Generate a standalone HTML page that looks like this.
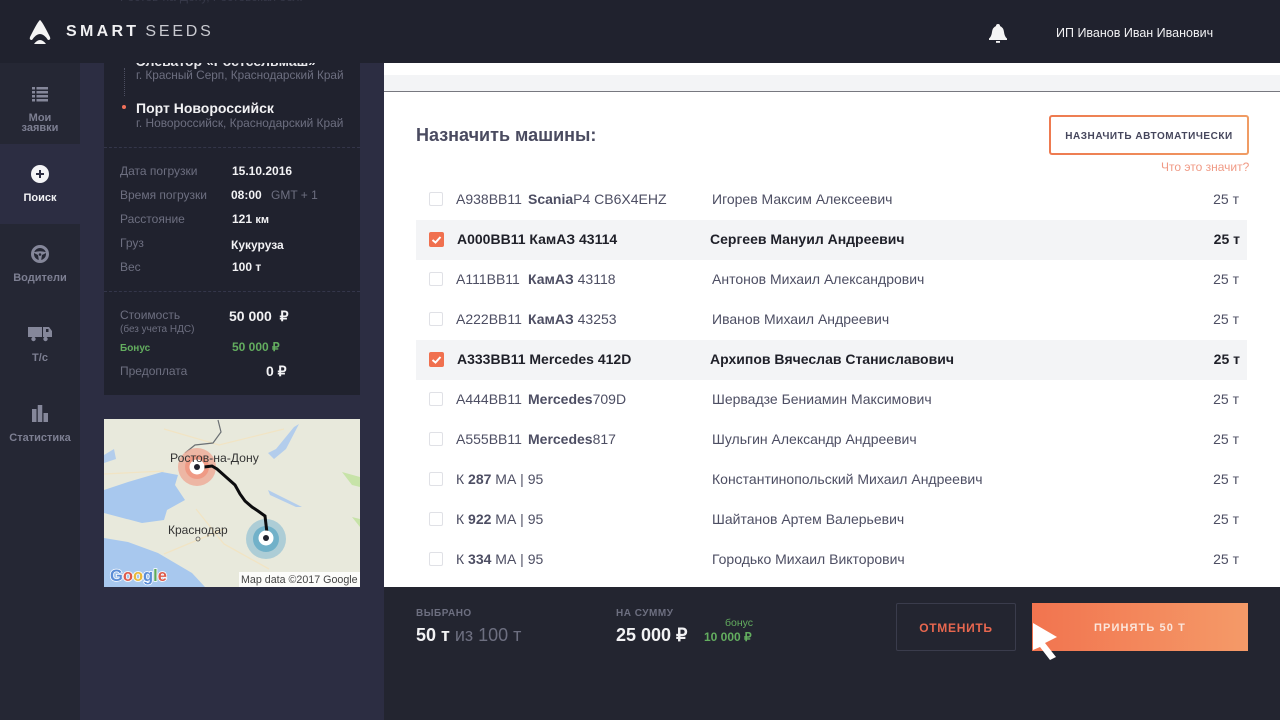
<!DOCTYPE html>
<html lang="ru"><head><meta charset="utf-8"><title>SmartSeeds</title>
<style>
*{margin:0;padding:0;box-sizing:border-box}
html,body{width:1280px;height:720px;overflow:hidden;background:#232530}
body{position:relative;font-family:"Liberation Sans",sans-serif}
.a{position:absolute}
.t{position:absolute;white-space:nowrap;line-height:16px;height:16px}
.nav{position:absolute;left:0;width:80px;text-align:center;font-size:11px;font-weight:700;color:#7d7f92;line-height:10px}
.g{color:#6d6f80;font-size:12px}
.w{color:#f2f2f4;font-size:12px;font-weight:700}
.row{position:absolute;left:416px;width:831px;height:40px;font-size:14px;color:#4d4e63}
.row.on{background:#f3f4f6;color:#1f2029;font-weight:700}
.row span{position:absolute;top:11px;line-height:16px;white-space:nowrap}
.row b{font-weight:700}
.row em{font-style:normal;display:inline-block;width:72px}
.cb{position:absolute;left:13px;top:12px;width:14px;height:14px;border:1px solid #e0e1e6;border-radius:2px;background:#fff}
.on .cb{background:#f0704f;border:0;width:15px;height:15px}
</style></head><body>
<div class="a" style="left:0;top:0;width:80px;height:720px;background:#252734"></div>
<div class="a" style="left:0;top:144px;width:80px;height:80px;background:#2c2d42"></div>
<div class="a" style="left:80px;top:0;width:304px;height:720px;background:#2c2d42"></div>
<div class="a" style="left:104px;top:0;width:256px;height:395px;background:#20222e"></div>
<div class="a" style="left:124px;top:68px;width:0;height:28px;border-left:1px dotted #4c4e60"></div>
<div class="a" style="left:122px;top:105px;width:4px;height:4px;border-radius:50%;background:#f0705a"></div>
<div class="t" style="left:136px;top:53px;font-size:14px;font-weight:700;color:#e8e8ec">Элеватор «Ростсельмаш»</div>
<div class="t" style="left:136px;top:67px;font-size:11.800px;color:#6d6f80">г. Красный Серп, Краснодарский Край</div>
<div class="t" style="left:136px;top:100px;font-size:14px;font-weight:700;color:#f2f2f4">Порт Новороссийск</div>
<div class="t" style="left:136px;top:115px;font-size:11.900px;color:#6d6f80">г. Новороссийск, Краснодарский Край</div>
<div class="a" style="left:104px;top:147px;width:256px;border-top:1px dashed #34364a"></div>
<div class="t g" style="left:120px;top:163px">Дата погрузки</div><div class="t w" style="left:232px;top:163px">15.10.2016</div>
<div class="t g" style="left:120px;top:187px">Время погрузки</div><div class="t w" style="left:231px;top:187px">08:00</div><div class="t g" style="left:271px;top:187px">GMT + 1</div>
<div class="t g" style="left:120px;top:211px">Расстояние</div><div class="t w" style="left:232px;top:211px">121 <span style="font-size:11px">км</span></div>
<div class="t g" style="left:120px;top:235px">Груз</div><div class="t w" style="left:231px;top:237px">Кукуруза</div>
<div class="t g" style="left:120px;top:259px">Вес</div><div class="t w" style="left:232px;top:259px">100 т</div>
<div class="a" style="left:104px;top:291px;width:256px;border-top:1px dashed #34364a"></div>
<div class="t g" style="left:120px;top:307px">Стоимость</div><div class="t" style="left:120px;top:324px;font-size:10px;color:#6d6f80;line-height:12px">(без учета НДС)</div>
<div class="t w" style="left:229px;top:308px;font-size:14px">50 000 &nbsp;₽</div>
<div class="t" style="left:120px;top:343px;font-size:10px;font-weight:700;color:#63ad5f;line-height:12px">Бонус</div>
<div class="t" style="left:232px;top:339px;font-size:12px;font-weight:700;color:#63ad5f">50 000 ₽</div>
<div class="t g" style="left:120px;top:363px">Предоплата</div><div class="t w" style="left:266px;top:363px;font-size:14px">0 ₽</div>

<svg class="a" style="left:104px;top:419px" width="256" height="168" viewBox="0 0 256 168">
<rect width="256" height="168" fill="#e8e9dc"/>
<path d="M0 71L24 63 58 53 74 56 71 66 81 81 63 91 60 101 38 104 0 94Z" fill="#a8c8ee"/>
<path d="M0 119L24 123 54 134 88 154 101 168H0Z" fill="#a8c8ee"/>
<path d="M0 36L10 30 12 40 0 44ZM164 34L172 30 190 8 195 5 182 30 170 40ZM164 71L198 88 192 88 166 76Z" fill="#b3cdec"/>
<path d="M238 53L256 58V68L248 66ZM248 98L256 100V108Z" fill="#c7e3a8"/>
<path d="M60 10L115 26 180 10M0 55L60 52M92 90L120 125 165 150M60 135L120 110" stroke="#f1e4c4" stroke-width="1.300" fill="none"/>
<path d="M114 1L117 13 109 24 91 26 81 34" stroke="#6b7074" stroke-width="1.200" fill="none"/>
<circle cx="93" cy="48" r="19" fill="#eea996" opacity=".8"/><circle cx="93" cy="48" r="12" fill="#ef8f78" opacity=".7"/>
<circle cx="162" cy="120" r="20" fill="#8dbfd3" opacity=".65"/><circle cx="162" cy="120" r="13" fill="#62aac6" opacity=".8"/>
<path d="M100 48L108 47 113 50 122 58 131 66 136 75 141 82 148 88 154 92 161 97 163 114" stroke="#0c0c0e" stroke-width="3" fill="none"/>
<circle cx="93" cy="48" r="7.500" fill="#fff"/><circle cx="93" cy="48" r="3" fill="#20222e"/>
<circle cx="162" cy="119" r="7.500" fill="#fff"/><circle cx="162" cy="119" r="3" fill="#20222e"/>
<circle cx="94" cy="120" r="2" fill="none" stroke="#555" stroke-width=".8"/>
<text x="66" y="43" font-family="Liberation Sans" font-size="12.200" fill="#333">Ростов-на-Дону</text>
<text x="64" y="115" font-family="Liberation Sans" font-size="12" fill="#333">Краснодар</text>
<text x="6" y="162" font-family="Liberation Sans" font-size="16.500" font-weight="700" fill="#5b8dd6" stroke="#fff" stroke-width="1.500" paint-order="stroke">G<tspan fill="#dd5b4c">o</tspan><tspan fill="#e8b93c">o</tspan><tspan fill="#5b8dd6">g</tspan><tspan fill="#5ea95c">l</tspan><tspan fill="#dd5b4c">e</tspan></text>
<rect x="135" y="153" width="121" height="15" fill="#fff" opacity=".85"/>
<text x="137" y="164" font-family="Liberation Sans" font-size="10.700" fill="#444">Map data ©2017 Google</text>
</svg>

<svg class="a" style="left:31px;top:85px" width="18" height="18" viewBox="0 0 18 18" fill="#85879a"><path d="M1 2h3v2.500H1zM5.500 2H17v2.500H5.500zM1 6h3v2.500H1zM5.500 6H17v2.500H5.500zM1 10h3v2.500H1zM5.500 10H17v2.500H5.500zM1 14h3v2.500H1zM5.500 14H17v2.500H5.500z"/></svg>
<div class="nav" style="top:113px">Мои<br>заявки</div>
<svg class="a" style="left:31px;top:165px" width="18" height="18" viewBox="0 0 18 18"><circle cx="9" cy="9" r="9" fill="#f4f4f6"/><path d="M5 9h8M9 5v8" stroke="#2c2d42" stroke-width="2"/></svg>
<div class="nav" style="top:193px;color:#f0f0f3">Поиск</div>
<svg class="a" style="left:31px;top:245px" width="18" height="18" viewBox="0 0 18 18"><circle cx="9" cy="9" r="7.500" fill="none" stroke="#85879a" stroke-width="3"/><path d="M2 7.500Q9 5 16 7.500L11 10 10 16H8L7 10Z" fill="#85879a"/><circle cx="9" cy="9.500" r="1.300" fill="#252734"/></svg>
<div class="nav" style="top:273px">Водители</div>
<svg class="a" style="left:28px;top:326px" width="24" height="16" viewBox="0 0 24 16" fill="#85879a"><path d="M0 1h14v10H0zM15 1h6l3 4v6h-9z"/><circle cx="5.500" cy="13" r="2.200"/><circle cx="17.500" cy="13" r="2.200"/><rect x="18" y="3" width="2.500" height="3" fill="#252734"/></svg>
<div class="nav" style="top:353px">Т/с</div>
<svg class="a" style="left:32px;top:405px" width="16" height="17" viewBox="0 0 16 17" fill="#85879a"><path d="M0 4h4.500v13H0zM5.750 0h4.500v17h-4.500zM11.500 8H16v9h-4.500z"/></svg>
<div class="nav" style="top:433px">Статистика</div>

<div class="a" style="left:384px;top:63px;width:896px;height:525px;background:#fff"></div>
<div class="a" style="left:384px;top:75px;width:896px;height:17px;background:#f3f4f6;border-bottom:1px solid #77787f"></div>
<div class="t" style="left:416px;top:125px;height:20px;line-height:20px;font-size:18px;font-weight:700;color:#4a4b60">Назначить машины:</div>
<div class="a" style="left:1049px;top:115px;width:200px;height:40px;border:2px solid transparent;border-radius:3px;background:linear-gradient(#fff,#fff) padding-box,linear-gradient(90deg,#ee7a50,#f09c64) border-box;text-align:center;line-height:39px;font-size:10px;font-weight:700;letter-spacing:.55px;color:#45465c">НАЗНАЧИТЬ АВТОМАТИЧЕСКИ</div>
<div class="t" style="left:1161px;top:159px;font-size:12px;color:#f09a85">Что это значит?</div>

<div class="row" style="top:180px"><i class="cb"></i><span style="left:40px"><em>А938ВВ11</em><b>Scania</b>Р4 СВ6Х4ЕНZ</span><span style="left:296px">Игорев Максим Алексеевич</span><span style="right:8px">25 т</span></div>
<div class="row on" style="top:220px"><i class="cb"></i><svg class="a" style="left:13px;top:12px" width="15" height="15"><path d="M3.500 8L6.500 10.500 11.500 5" stroke="#fff" stroke-width="2" fill="none"/></svg><span style="left:41px">А000ВВ11 КамАЗ 43114</span><span style="left:294px">Сергеев Мануил Андреевич</span><span style="right:7px">25 т</span></div>
<div class="row" style="top:260px"><i class="cb"></i><span style="left:40px"><em>А111ВВ11</em><b>КамАЗ</b> 43118</span><span style="left:296px">Антонов Михаил Александрович</span><span style="right:8px">25 т</span></div>
<div class="row" style="top:300px"><i class="cb"></i><span style="left:40px"><em>А222ВВ11</em><b>КамАЗ</b> 43253</span><span style="left:296px">Иванов Михаил Андреевич</span><span style="right:8px">25 т</span></div>
<div class="row on" style="top:340px"><i class="cb"></i><svg class="a" style="left:13px;top:12px" width="15" height="15"><path d="M3.500 8L6.500 10.500 11.500 5" stroke="#fff" stroke-width="2" fill="none"/></svg><span style="left:41px">А333ВВ11 Mercedes 412D</span><span style="left:294px">Архипов Вячеслав Станиславович</span><span style="right:7px">25 т</span></div>
<div class="row" style="top:380px"><i class="cb"></i><span style="left:40px"><em>А444ВВ11</em><b>Mercedes</b>709D</span><span style="left:296px">Шервадзе Бениамин Максимович</span><span style="right:8px">25 т</span></div>
<div class="row" style="top:420px"><i class="cb"></i><span style="left:40px"><em>А555ВВ11</em><b>Mercedes</b>817</span><span style="left:296px">Шульгин Александр Андреевич</span><span style="right:8px">25 т</span></div>
<div class="row" style="top:460px"><i class="cb"></i><span style="left:40px">К <b>287</b> МА | 95</span><span style="left:296px">Константинопольский Михаил Андреевич</span><span style="right:8px">25 т</span></div>
<div class="row" style="top:500px"><i class="cb"></i><span style="left:40px">К <b>922</b> МА | 95</span><span style="left:296px">Шайтанов Артем Валерьевич</span><span style="right:8px">25 т</span></div>
<div class="row" style="top:540px"><i class="cb"></i><span style="left:40px">К <b>334</b> МА | 95</span><span style="left:296px">Городько Михаил Викторович</span><span style="right:8px">25 т</span></div>

<div class="a" style="left:384px;top:587px;width:896px;height:133px;background:#232530"></div>
<div class="t" style="left:416px;top:606px;font-size:10px;font-weight:700;letter-spacing:.5px;color:#6d6f80">ВЫБРАНО</div>
<div class="t" style="left:416px;top:626px;height:18px;line-height:18px;font-size:18px;color:#6d6f80"><b style="color:#f2f2f4">50 т</b> из 100 т</div>
<div class="t" style="left:616px;top:606px;font-size:10px;font-weight:700;letter-spacing:.5px;color:#6d6f80">НА СУММУ</div>
<div class="t" style="left:616px;top:626px;height:18px;line-height:18px;font-size:18px;font-weight:700;color:#f2f2f4">25 000 ₽</div>
<div class="t" style="left:725px;top:615px;font-size:10.500px;color:#63ad5f">бонус</div>
<div class="t" style="left:704px;top:629px;font-size:12px;font-weight:700;color:#63ad5f">10 000 ₽</div>
<div class="a" style="left:896px;top:603px;width:120px;height:48px;border:1px solid #3a3c4c;border-radius:2px;text-align:center;line-height:48px;font-size:12px;font-weight:700;letter-spacing:.7px;color:#e8674f">ОТМЕНИТЬ</div>
<div class="a" style="left:1032px;top:603px;width:216px;height:48px;background:linear-gradient(90deg,#f2744f,#f49a68);text-align:center;line-height:51px;font-size:11px;font-weight:700;letter-spacing:1.100px;color:#fbe6dc">ПРИНЯТЬ 50 Т</div>
<svg class="a" style="left:1032px;top:621px" width="28" height="40" viewBox="0 0 28 40"><path d="M1 2L25 16 13 22 24 36 18 39 8 26 1 29Z" fill="#fff"/></svg>

<div class="a" style="left:0;top:0;width:1280px;height:63px;background:#20222e"></div>
<div class="t" style="left:120px;top:-11px;font-size:12px;color:#45475a;opacity:.6">Ростов-на-Дону, Ростовская обл.</div>
<svg class="a" style="left:29px;top:19px" width="22" height="26" viewBox="0 0 22 26" fill="#f4f4f4"><path d="M11 1Q13 2 21 18Q22 21 19 21Q15 15 11 15Q7 15 3 21Q0 21 1 18Q9 2 11 1Z"/><path d="M5 25Q11 17 17 25Z"/></svg>
<div class="t" style="left:66px;top:24px;font-size:16px;letter-spacing:3.300px;color:#f0f0f2;font-weight:700">SMART<span style="font-weight:400;color:#c9cad0;letter-spacing:2.800px;margin-left:6px">SEEDS</span></div>
<svg class="a" style="left:988px;top:24px" width="20" height="20" viewBox="0 0 20 20" fill="#f4f4f4"><path d="M10 0Q12 0 12 2Q15.500 3.500 16 8Q16.500 12.500 19 14.500V16H1V14.500Q3.500 12.500 4 8Q4.500 3.500 8 2Q8 0 10 0Z"/><rect x="8" y="17" width="4" height="1.800"/></svg>
<div class="t" style="left:1056px;top:25px;font-size:12.500px;color:#f2f2f4">ИП Иванов Иван Иванович</div>
</body></html>
